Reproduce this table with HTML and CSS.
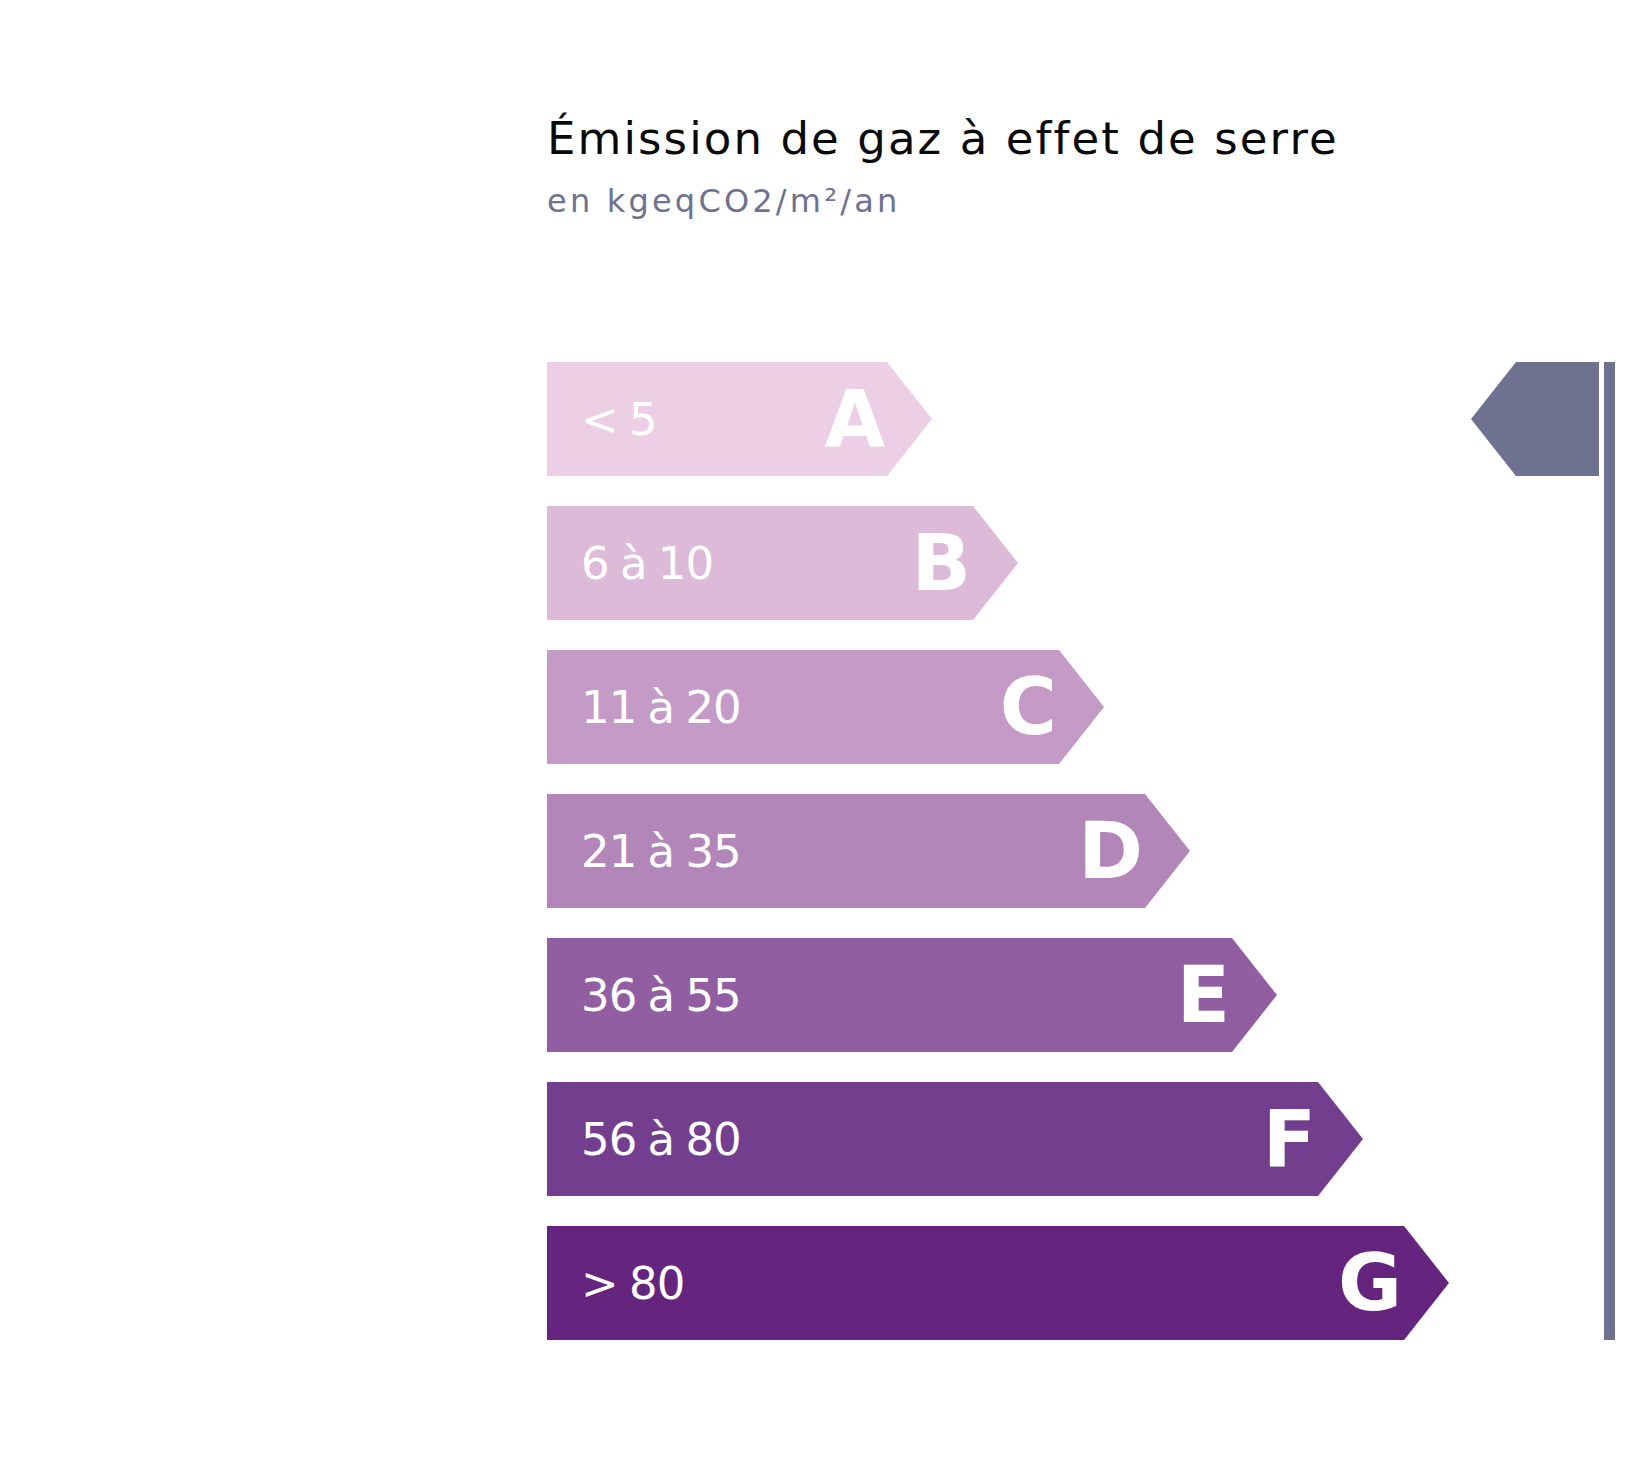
FILE: index.html
```html
<!DOCTYPE html>
<html lang="fr">
<head>
<meta charset="utf-8">
<title>Émission de gaz à effet de serre</title>
<link rel="stylesheet" href="styles.css">
</head>
<body>
<main class="page">
  <header class="heading">
    <h1 class="title">Émission de gaz à effet de serre</h1>
    <p class="subtitle">en kgeqCO2/m²/an</p>
  </header>
  <section class="chart">
    <ol class="bars">
      <li class="bar bar-a"><span class="range">&lt; 5</span><span class="grade">A</span></li>
      <li class="bar bar-b"><span class="range">6 à 10</span><span class="grade">B</span></li>
      <li class="bar bar-c"><span class="range">11 à 20</span><span class="grade">C</span></li>
      <li class="bar bar-d"><span class="range">21 à 35</span><span class="grade">D</span></li>
      <li class="bar bar-e"><span class="range">36 à 55</span><span class="grade">E</span></li>
      <li class="bar bar-f"><span class="range">56 à 80</span><span class="grade">F</span></li>
      <li class="bar bar-g"><span class="range">&gt; 80</span><span class="grade">G</span></li>
    </ol>
    <div class="scale">
      <div class="marker"></div>
      <div class="rule"></div>
    </div>
  </section>
</main>
</body>
</html>
```
FILE: styles.css
```css
html, body {
  margin: 0;
  padding: 0;
  background: #ffffff;
}

.page {
  width: 1637px;
  min-height: 1459px;
  box-sizing: border-box;
  padding-left: 547px;
  font-family: "DejaVu Sans", "Noto Sans", sans-serif;
}

.heading {
  padding-top: 112px;
}

.title {
  margin: 0;
  font-size: 45px;
  line-height: 54px;
  font-weight: 400;
  letter-spacing: 2.1px;
  white-space: nowrap;
  color: #0a0a0a;
}

.subtitle {
  margin: 15px 0 0;
  font-size: 32px;
  line-height: 40px;
  letter-spacing: 3.2px;
  color: #6e7290;
}

.chart {
  display: flex;
  margin-top: 141px;
}

.bars {
  list-style: none;
  margin: 0;
  padding: 0;
  width: 902px;
  display: flex;
  flex-direction: column;
  gap: 30px;
}

.bar {
  height: 114px;
  box-sizing: border-box;
  display: flex;
  align-items: center;
  justify-content: space-between;
  padding-left: 34px;
  padding-right: 47px;
  color: #ffffff;
  clip-path: polygon(0 0, calc(100% - 45px) 0, 100% 50%, calc(100% - 45px) 100%, 0 100%);
}

.range {
  font-size: 45px;
  line-height: 1;
  letter-spacing: -1px;
  word-spacing: -2px;
}

.grade {
  font-size: 78px;
  font-weight: 700;
  line-height: 1;
}

.bar-a { width: 385px; background: #eccfe4; }
.bar-b { width: 471px; background: #ddbad8; }
.bar-c { width: 557px; background: #c49bc6; }
.bar-d { width: 643px; background: #b386b9; }
.bar-e { width: 730px; background: #925ea2; }
.bar-f { width: 816px; background: #743e8e; }
.bar-g { width: 902px; background: #65257e; }

.scale {
  display: flex;
  gap: 5px;
  margin-left: 22px;
}

.marker {
  width: 128px;
  height: 114px;
  background: #6e7290;
  clip-path: polygon(0 50%, 45px 0, 100% 0, 100% 100%, 45px 100%);
}

.rule {
  width: 11px;
  background: #6e7290;
}
```
